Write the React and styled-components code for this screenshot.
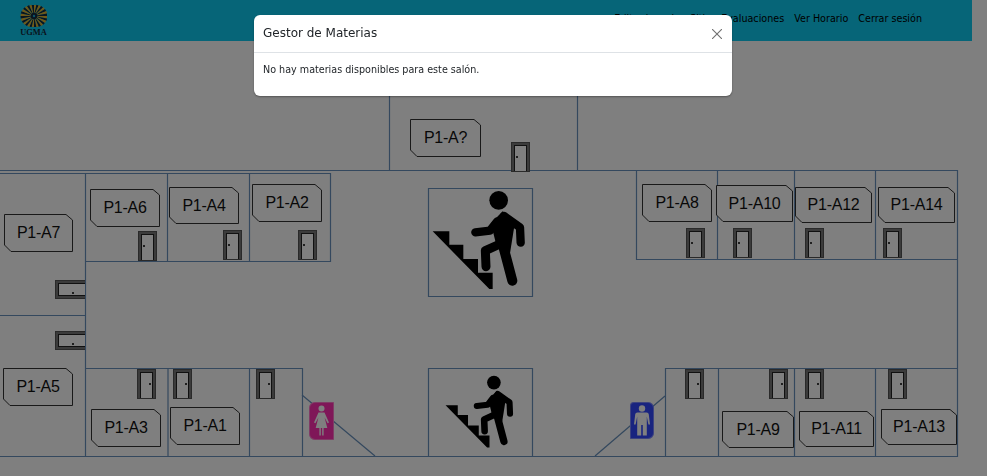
import React from "react";
import styled, { createGlobalStyle } from "styled-components";

const WALLS = [
  "M0 170.5H957", "M0 456.5H957", "M957.5 170V457",
  "M86 173.5H330.5V261.5H86", "M85.5 173V457", "M167.5 173V261", "M249.5 173V261",
  "M0 173.5H86", "M0 315.5H86",
  "M86 368.5H302.5V456", "M168 368V456", "M249.5 368V456",
  "M302 395L375 456",
  "M389.5 96V170", "M577.5 96V170",
  "M428.5 188.5H532.5V296.5H428.5Z", "M428.5 456V368.5H532.5V456",
  "M636.5 170V259.5H957", "M717.5 170V259", "M794.5 170V259", "M875.5 170V259",
  "M665.5 456V368.5H957", "M718.5 368V456", "M794.5 368V456", "M875.5 368V456",
  "M595 456L665 396",
];

const TAGS = [
  { name: "P1-A7", x: 4, y: 214, w: 69, h: 38 },
  { name: "P1-A6", x: 90, y: 189, w: 70, h: 38 },
  { name: "P1-A4", x: 169, y: 187, w: 70, h: 37 },
  { name: "P1-A2", x: 252, y: 184, w: 70, h: 38 },
  { name: "P1-A5", x: 3, y: 368, w: 70, h: 38 },
  { name: "P1-A3", x: 91, y: 409, w: 70, h: 38 },
  { name: "P1-A1", x: 170, y: 407, w: 70, h: 38 },
  { name: "P1-A?", x: 410, y: 119, w: 71, h: 38 },
  { name: "P1-A8", x: 642, y: 184, w: 70, h: 38 },
  { name: "P1-A10", x: 716, y: 185, w: 77, h: 37 },
  { name: "P1-A12", x: 795, y: 187, w: 77, h: 36 },
  { name: "P1-A14", x: 878, y: 187, w: 77, h: 36 },
  { name: "P1-A9", x: 722, y: 411, w: 72, h: 37 },
  { name: "P1-A11", x: 799, y: 411, w: 75, h: 36 },
  { name: "P1-A13", x: 881, y: 409, w: 76, h: 36 },
];

// dot: which side the handle sits on
const DOORS = [
  { x: 138, y: 231, dot: "left" }, { x: 223, y: 230, dot: "left" }, { x: 298, y: 230, dot: "left" },
  { x: 137, y: 369, dot: "right" }, { x: 173, y: 369, dot: "right" }, { x: 256, y: 369, dot: "right" },
  { x: 511, y: 142, dot: "left" },
  { x: 686, y: 228, dot: "left" }, { x: 733, y: 228, dot: "left" }, { x: 805, y: 228, dot: "left" }, { x: 883, y: 228, dot: "left" },
  { x: 685, y: 369, dot: "right" }, { x: 769, y: 369, dot: "right" }, { x: 805, y: 369, dot: "right" }, { x: 888, y: 369, dot: "right" },
];

const NAV_LINKS = ["Editar horario", "Sitio", "Evaluaciones", "Ver Horario", "Cerrar sesión"];

export default function App() {
  return (
    <>
      <GlobalStyle />
      <Page>
        <Header>
          <Brand>
            <Sunburst />
            <BrandName>UGMA</BrandName>
          </Brand>
          <Nav>
            {NAV_LINKS.map((x) => (
              <NavLink key={x}>{x}</NavLink>
            ))}
          </Nav>
        </Header>
        <Plan>
          <Walls width="972" height="435" viewBox="0 41 972 435">
            {WALLS.map((d, i) => (
              <path key={i} d={d} />
            ))}
          </Walls>
          {TAGS.map((t) => (
            <RoomTag key={t.name} {...t} />
          ))}
          {DOORS.map((d, i) => (
            <Door key={i} $x={d.x} $y={d.y} $dot={d.dot}>
              <DoorLeaf $dot={d.dot} />
            </Door>
          ))}
          <SideDoor $y={280}><SideLeaf /></SideDoor>
          <SideDoor $y={331}><SideLeaf /></SideDoor>
          <StairsIcon $x={431} $y={190} $w={96} $h={101} />
          <StairsIcon $x={444} $y={375} $w={71} $h={74} />
          <RestroomSign $x={309} $y={402} $w={25} $h={38} $color="#ff2fb0" $flip={false}>
            <WomanFigure />
          </RestroomSign>
          <RestroomSign $x={630} $y={402} $w={24} $h={37} $color="#3348ff" $flip>
            <ManFigure />
          </RestroomSign>
        </Plan>
        <Footer />
      </Page>
      <Backdrop>
        <Modal>
          <ModalHeader>
            <ModalTitle>Gestor de Materias</ModalTitle>
            <CloseButton aria-label="Cerrar">
              <svg width="10" height="10" viewBox="0 0 10 10">
                <path d="M0 0L10 10M10 0L0 10" stroke="#707070" strokeWidth="1.1" />
              </svg>
            </CloseButton>
          </ModalHeader>
          <ModalBody>No hay materias disponibles para este salón.</ModalBody>
        </Modal>
      </Backdrop>
    </>
  );
}

function RoomTag({ name, x, y, w, h }) {
  const points = `0.5,0.5 ${w - 7},0.5 ${w - 0.5},6 ${w - 0.5},${h - 0.5} 7,${h - 0.5} 0.5,${h - 7}`;
  return (
    <Tag $x={x} $y={y} $w={w} $h={h}>
      <TagShape width={w} height={h}>
        <polygon points={points} />
      </TagShape>
      <span>{name}</span>
    </Tag>
  );
}

function Sunburst() {
  const rays = [];
  for (let i = 0; i < 32; i++) {
    const a0 = (i / 32) * Math.PI * 2;
    const a1 = ((i + 1) / 32) * Math.PI * 2;
    const horiz = Math.abs(Math.cos((a0 + a1) / 2));
    const r = 11.5 + horiz * 2;
    rays.push(
      <path
        key={i}
        d={`M14 12L${14 + r * Math.cos(a0)} ${12 + r * Math.sin(a0) * 0.95}L${14 + r * Math.cos(a1)} ${12 + r * Math.sin(a1) * 0.95}Z`}
        fill={i % 2 ? "#14283c" : "#e0b12e"}
      />
    );
  }
  return (
    <svg width="27" height="23" viewBox="0 0 27 23">
      {rays}
      <circle cx="14" cy="12" r="3.2" fill="#14283c" />
      <circle cx="14" cy="12" r="1.2" fill="#1aa7d0" />
    </svg>
  );
}

function StairsIcon(props) {
  return (
    <FreeSvg {...props} viewBox="155 300 288 303">
      <circle cx="358" cy="331" r="28" />
      <polygon points="160,424 210,424 210,464 252,464 252,507 296,507 296,548 340,548 340,597 330,597" />
      <polygon points="335,400 370,364 408,390 392,490 350,462" />
      <g fill="none" stroke="#000" strokeLinecap="round" strokeLinejoin="round">
        <path d="M374 378L422 412L424 458" strokeWidth="25" />
        <path d="M288 427L332 422L354 394" strokeWidth="25" />
        <path d="M372 470L399 572" strokeWidth="30" />
        <path d="M362 462L318 482L320 530" strokeWidth="27" />
      </g>
    </FreeSvg>
  );
}

function WomanFigure() {
  return (
    <svg width="25" height="38" viewBox="0 0 25 38">
      <g fill="#fff">
        <circle cx="12.5" cy="6.5" r="3" />
        <path d="M9.5 10.5H15.5L20 20.5L18.6 21.3L15.6 15.5L18.3 26H14.6V33.5H13.2V26H11.8V33.5H10.4V26H6.7L9.4 15.5L6.4 21.3L5 20.5Z" />
      </g>
    </svg>
  );
}

function ManFigure() {
  return (
    <svg width="24" height="37" viewBox="0 0 24 37">
      <g fill="#fff">
        <circle cx="12" cy="6.5" r="3.2" />
        <path d="M7.5 10.5H16.5C17.8 10.5 18.6 11.4 18.8 12.6L20 22.5H18.4L16.8 14.5V33.5H12.8V23H11.2V33.5H7.2V14.5L5.6 22.5H4L5.2 12.6C5.4 11.4 6.2 10.5 7.5 10.5Z" />
      </g>
    </svg>
  );
}

const GlobalStyle = createGlobalStyle`
  html, body {
    margin: 0;
    padding: 0;
    background: #fff;
    overflow: hidden;
  }
  * {
    box-sizing: border-box;
  }
`;

const Page = styled.div`
  width: 987px;
  height: 476px;
  display: flex;
  flex-flow: column nowrap;
  font-family: "DejaVu Sans", sans-serif;
`;

const Header = styled.header`
  width: 972px;
  height: 41px;
  flex: none;
  background: #0dcaf0;
  display: flex;
  justify-content: space-between;
  padding: 4px 50px 0 20px;
`;

const Brand = styled.div`
  width: 27px;
  display: flex;
  flex-flow: column nowrap;
  align-items: center;
  svg {
    display: block;
    flex: none;
  }
`;

const BrandName = styled.span`
  font-family: "Liberation Serif", serif;
  font-weight: 700;
  font-size: 8.4px;
  line-height: 9px;
  margin-top: 1px;
  color: #14283c;
`;

const Nav = styled.nav`
  display: flex;
  gap: 10px;
  padding-top: 8px;
`;

const NavLink = styled.a`
  font-size: 9.6px;
  line-height: 13px;
  color: #000;
  white-space: nowrap;
`;

const Plan = styled.main`
  position: relative;
  width: 972px;
  flex: 1;
`;

const Footer = styled.footer`
  flex: none;
  height: 1px;
  background: #000;
`;

const Walls = styled.svg`
  display: block;
  fill: none;
  stroke: #6890bc;
  stroke-width: 1.2;
`;

const Tag = styled.div`
  position: absolute;
  left: ${(p) => p.$x}px;
  top: ${(p) => p.$y - 41}px;
  width: ${(p) => p.$w}px;
  height: ${(p) => p.$h}px;
  display: flex;
  align-items: center;
  justify-content: center;
  font-family: "Liberation Sans", sans-serif;
  font-size: 16px;
  letter-spacing: -0.25px;
  color: #111;
  span {
    position: relative;
  }
`;

const TagShape = styled.svg`
  position: absolute;
  left: 0;
  top: 0;
  fill: #fff;
  stroke: #333;
  stroke-width: 1;
`;

const Door = styled.div`
  position: absolute;
  left: ${(p) => p.$x}px;
  top: ${(p) => p.$y - 41}px;
  width: 19px;
  height: 30px;
  border: 1px solid #555;
  background: #777;
  padding: 2px 2px 0;
  display: flex;
`;

const DoorLeaf = styled.div`
  position: relative;
  flex: 1;
  background: #fff;
  border: 1px solid #222;
  border-bottom-width: 0;
  &::after {
    content: "";
    position: absolute;
    top: 10px;
    ${(p) => (p.$dot === "left" ? "left: 1px;" : "right: 1px;")}
    width: 2px;
    height: 2px;
    background: #000;
    border-radius: 50%;
  }
`;

const SideDoor = styled.div`
  position: absolute;
  left: 55px;
  top: ${(p) => p.$y - 41}px;
  width: 30px;
  height: 19px;
  border: 1px solid #555;
  border-right: 0;
  background: #777;
  padding: 2px 0 2px 2px;
  display: flex;
`;

const SideLeaf = styled.div`
  position: relative;
  flex: 1;
  background: #fff;
  border: 1px solid #222;
  border-right-width: 0;
  &::after {
    content: "";
    position: absolute;
    left: 13px;
    bottom: 1px;
    width: 2px;
    height: 2px;
    background: #000;
    border-radius: 50%;
  }
`;

const FreeSvg = styled.svg.attrs((p) => ({ width: p.$w, height: p.$h }))`
  position: absolute;
  left: ${(p) => p.$x}px;
  top: ${(p) => p.$y - 41}px;
  fill: #000;
`;

const RestroomSign = styled.div`
  position: absolute;
  left: ${(p) => p.$x}px;
  top: ${(p) => p.$y - 41}px;
  width: ${(p) => p.$w}px;
  height: ${(p) => p.$h}px;
  background: ${(p) => p.$color};
  border-radius: ${(p) => (p.$flip ? "4px 6px 6px 1px" : "6px 1px 1px 6px")};
  box-shadow: inset 0 0 0 1px rgba(255, 255, 255, 0.35);
  svg {
    display: block;
  }
`;

const Backdrop = styled.div`
  position: fixed;
  inset: 0;
  background: rgba(0, 0, 0, 0.5);
  display: flex;
  justify-content: center;
  align-items: flex-start;
  padding: 15px 1px 0 0;
`;

const Modal = styled.div`
  width: 478px;
  height: 81px;
  background: #fff;
  border-radius: 6px;
  box-shadow: 0 1px 2px rgba(0, 0, 0, 0.35);
  font-family: "DejaVu Sans", sans-serif;
  color: #212529;
`;

const ModalHeader = styled.div`
  height: 38px;
  display: flex;
  align-items: center;
  justify-content: space-between;
  padding: 0 10px 2px 9px;
  border-bottom: 1px solid #dee2e6;
`;

const ModalTitle = styled.h5`
  margin: 0;
  font-size: 12px;
  font-weight: 400;
  letter-spacing: 0;
`;

const CloseButton = styled.button`
  border: 0;
  padding: 0;
  background: none;
  display: flex;
  margin-top: 3px;
`;

const ModalBody = styled.div`
  padding: 10px 9px;
  font-size: 9.6px;
  line-height: 13px;
`;
